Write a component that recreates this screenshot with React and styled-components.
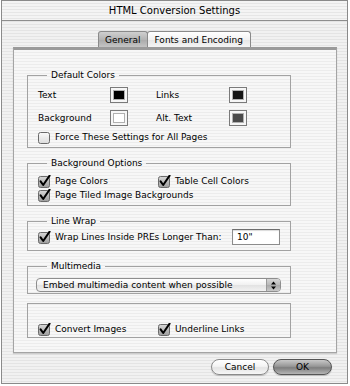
import React from "react";
import styled, { createGlobalStyle } from "styled-components";

const GlobalStyle = createGlobalStyle`
  html, body {
    margin: 0;
    padding: 0;
    background: #ffffff;
  }
  body {
    font-family: "DejaVu Sans", "Liberation Sans", sans-serif;
    font-size: 9px;
    color: #000;
  }
`;

const stripes = (a, b) =>
  `repeating-linear-gradient(to bottom, ${a} 0px, ${a} 2px, ${b} 2px, ${b} 3px)`;

const Window = styled.div`
  box-sizing: border-box;
  width: 347px;
  height: 384px;
  margin-left: 1px;
  border: 1px solid #8a8a8a;
  background: ${stripes("#f1f1f1", "#e4e4e4")};
  display: flex;
  flex-direction: column;
`;

const TitleBar = styled.div`
  height: 19px;
  border-bottom: 1px solid #8e8e8e;
  display: flex;
  align-items: center;
  justify-content: center;
  font-size: 10px;
  color: #000;
  background: ${stripes("#f4f4f4", "#e6e6e6")};
`;

const TabRow = styled.div`
  display: flex;
  justify-content: center;
  margin-top: 10px;
  padding-left: 1px;
`;

const Tab = styled.div`
  height: 16px;
  box-sizing: border-box;
  padding: 0 ${(p) => (p.$active ? 6 : 7)}px;
  display: flex;
  align-items: center;
  border: 1px solid #8a8a8a;
  border-bottom: none;
  border-radius: 3px 3px 0 0;
  margin-left: -1px;
  color: #000;
  background: ${(p) =>
    p.$active
      ? "linear-gradient(to bottom, #cfcfcf, #b4b4b4 50%, #a9a9a9 51%, #c4c4c4)"
      : "linear-gradient(to bottom, #ffffff, #f2f2f2 50%, #e6e6e6 51%, #f4f4f4)"};
`;

const Panel = styled.div`
  margin: 0 10px 0 11px;
  height: 306px;
  box-sizing: border-box;
  border: 1px solid #a4a4a4;
  border-top: 3px solid #9a9a9a;
  box-shadow: 0 1px 1px rgba(0, 0, 0, 0.15);
  background: ${stripes("#f7f7f7", "#ececec")};
  padding: 19px 0 12px 13px;
  display: flex;
  flex-direction: column;
  gap: 9px;
`;

const Group = styled.fieldset`
  margin: 0;
  width: 264px;
  box-sizing: border-box;
  border: 1px solid #a2a2a2;
  padding: ${(p) => p.$pad || "6px 10px 4px"};
  min-width: 0;
`;

const Legend = styled.legend`
  margin-left: 9px;
  padding: 0 4px;
  line-height: 12px;
  font-size: 9px;
`;

const ColorGrid = styled.div`
  display: grid;
  grid-template-columns: 72px 46px 73px 18px;
  grid-auto-rows: 16px;
  row-gap: 7px;
  align-items: center;
`;

const Swatch = styled.div`
  width: 18px;
  height: 16px;
  box-sizing: border-box;
  border: 1px solid #7a7a7a;
  background: #f6f6f6;
  padding: 2px;
  div {
    width: 100%;
    height: 100%;
    box-sizing: border-box;
    border: 1px solid #b0b0b0;
    background: ${(p) => p.$color};
  }
`;

const CheckRow = styled.label`
  display: flex;
  align-items: center;
  gap: 3px;
  height: ${(p) => p.$h || 12}px;
  margin-top: ${(p) => p.$mt || 0}px;
  white-space: nowrap;
  grid-column: ${(p) => (p.$wide ? "1 / -1" : "auto")};
  svg {
    flex-shrink: 0;
  }
`;

const CheckGrid = styled.div`
  display: grid;
  grid-template-columns: 120px 1fr;
  row-gap: 2px;
`;

const TextField = styled.div`
  margin-left: auto;
  width: 48px;
  height: 16px;
  box-sizing: border-box;
  border: 1px solid #8c8c8c;
  border-top-color: #6e6e6e;
  background: #fff;
  box-shadow: inset 0 1px 1px rgba(0, 0, 0, 0.15);
  padding-left: 4px;
  line-height: 14px;
`;

const Popup = styled.div`
  margin-left: -2px;
  width: 245px;
  height: 14px;
  box-sizing: border-box;
  border: 1px solid #8e8e8e;
  border-radius: 4px;
  background: linear-gradient(to bottom, #ffffff, #f0f0f0 50%, #e2e2e2 51%, #f2f2f2);
  display: flex;
  align-items: center;
  overflow: hidden;
`;

const PopupText = styled.span`
  flex: 1;
  padding-left: 6px;
`;

const PopupArrows = styled.div`
  width: 13px;
  height: 100%;
  border-left: 1px solid #9a9a9a;
  background: linear-gradient(to bottom, #d6d6d6, #b8b8b8 50%, #a8a8a8 51%, #c8c8c8);
  display: flex;
  align-items: center;
  justify-content: center;
`;

const ButtonRow = styled.div`
  display: flex;
  justify-content: flex-end;
  gap: 4px;
  margin-top: 6px;
  padding-right: 15px;
`;

const Button = styled.button`
  font-family: inherit;
  font-size: 9px;
  color: #000;
  height: 16px;
  width: ${(p) => p.$w}px;
  padding: 0;
  border-radius: 8px;
  border: 1px solid ${(p) => (p.$primary ? "#555" : "#8a8a8a")};
  background: ${(p) =>
    p.$primary
      ? "linear-gradient(to bottom, #c8c8c8, #979797 45%, #7e7e7e 55%, #b4b4b4)"
      : "linear-gradient(to bottom, #ffffff, #f4f4f4 45%, #e4e4e4 55%, #f6f6f6)"};
  box-shadow: 0 1px 1px rgba(0, 0, 0, 0.2);
`;

const Checkbox = ({ checked }) => (
  <svg width="14" height="13" viewBox="0 0 14 13">
    <defs>
      <linearGradient id={checked ? "cbOn" : "cbOff"} x1="0" y1="0" x2="0" y2="1">
        <stop offset="0" stopColor={checked ? "#d8d8d8" : "#fafafa"} />
        <stop offset="1" stopColor={checked ? "#9c9c9c" : "#dcdcdc"} />
      </linearGradient>
    </defs>
    <rect
      x="0.5"
      y="1.5"
      width="11"
      height="11"
      rx="2"
      fill={`url(#${checked ? "cbOn" : "cbOff"})`}
      stroke="#6a6a6a"
    />
    {checked && (
      <path
        d="M2.6 6.4 L5.2 10 L11.6 0.6"
        fill="none"
        stroke="#000"
        strokeWidth="2"
        strokeLinecap="round"
        strokeLinejoin="round"
      />
    )}
  </svg>
);

const Check = ({ checked, children, ...rest }) => (
  <CheckRow {...rest}>
    <Checkbox checked={checked} />
    <span>{children}</span>
  </CheckRow>
);

const App = () => {
  return (
    <>
      <GlobalStyle />
      <Window>
        <TitleBar>HTML Conversion Settings</TitleBar>
        <TabRow>
          <Tab $active>General</Tab>
          <Tab>Fonts and Encoding</Tab>
        </TabRow>
        <Panel>
          <Group>
            <Legend>Default Colors</Legend>
            <ColorGrid>
              <span>Text</span>
              <Swatch $color="#000000">
                <div />
              </Swatch>
              <span>Links</span>
              <Swatch $color="#151515">
                <div />
              </Swatch>
              <span>Background</span>
              <Swatch $color="#ffffff">
                <div />
              </Swatch>
              <span>Alt. Text</span>
              <Swatch $color="#4a4a4a">
                <div />
              </Swatch>
            </ColorGrid>
            <Check $mt={5}>Force These Settings for All Pages</Check>
          </Group>

          <Group>
            <Legend>Background Options</Legend>
            <CheckGrid>
              <Check checked>Page Colors</Check>
              <Check checked>Table Cell Colors</Check>
              <Check checked $wide>
                Page Tiled Image Backgrounds
              </Check>
            </CheckGrid>
          </Group>

          <Group $pad="2px 10px 5px">
            <Legend>Line Wrap</Legend>
            <CheckRow $h={16}>
              <Checkbox checked />
              <span>Wrap Lines Inside PREs Longer Than:</span>
              <TextField>10"</TextField>
            </CheckRow>
          </Group>

          <Group $pad="6px 10px 1px">
            <Legend>Multimedia</Legend>
            <Popup>
              <PopupText>Embed multimedia content when possible</PopupText>
              <PopupArrows>
                <svg width="5" height="9" viewBox="0 0 5 9">
                  <path d="M2.5 0.5 L5 3.5 L0 3.5 Z" fill="#000" />
                  <path d="M2.5 8.5 L5 5.5 L0 5.5 Z" fill="#000" />
                </svg>
              </PopupArrows>
            </Popup>
          </Group>

          <Group $pad="19px 10px 2px">
            <CheckGrid>
              <Check checked>Convert Images</Check>
              <Check checked>Underline Links</Check>
            </CheckGrid>
          </Group>
        </Panel>
        <ButtonRow>
          <Button $w={58}>Cancel</Button>
          <Button $w={59} $primary>
            OK
          </Button>
        </ButtonRow>
      </Window>
    </>
  );
};

export default App;
